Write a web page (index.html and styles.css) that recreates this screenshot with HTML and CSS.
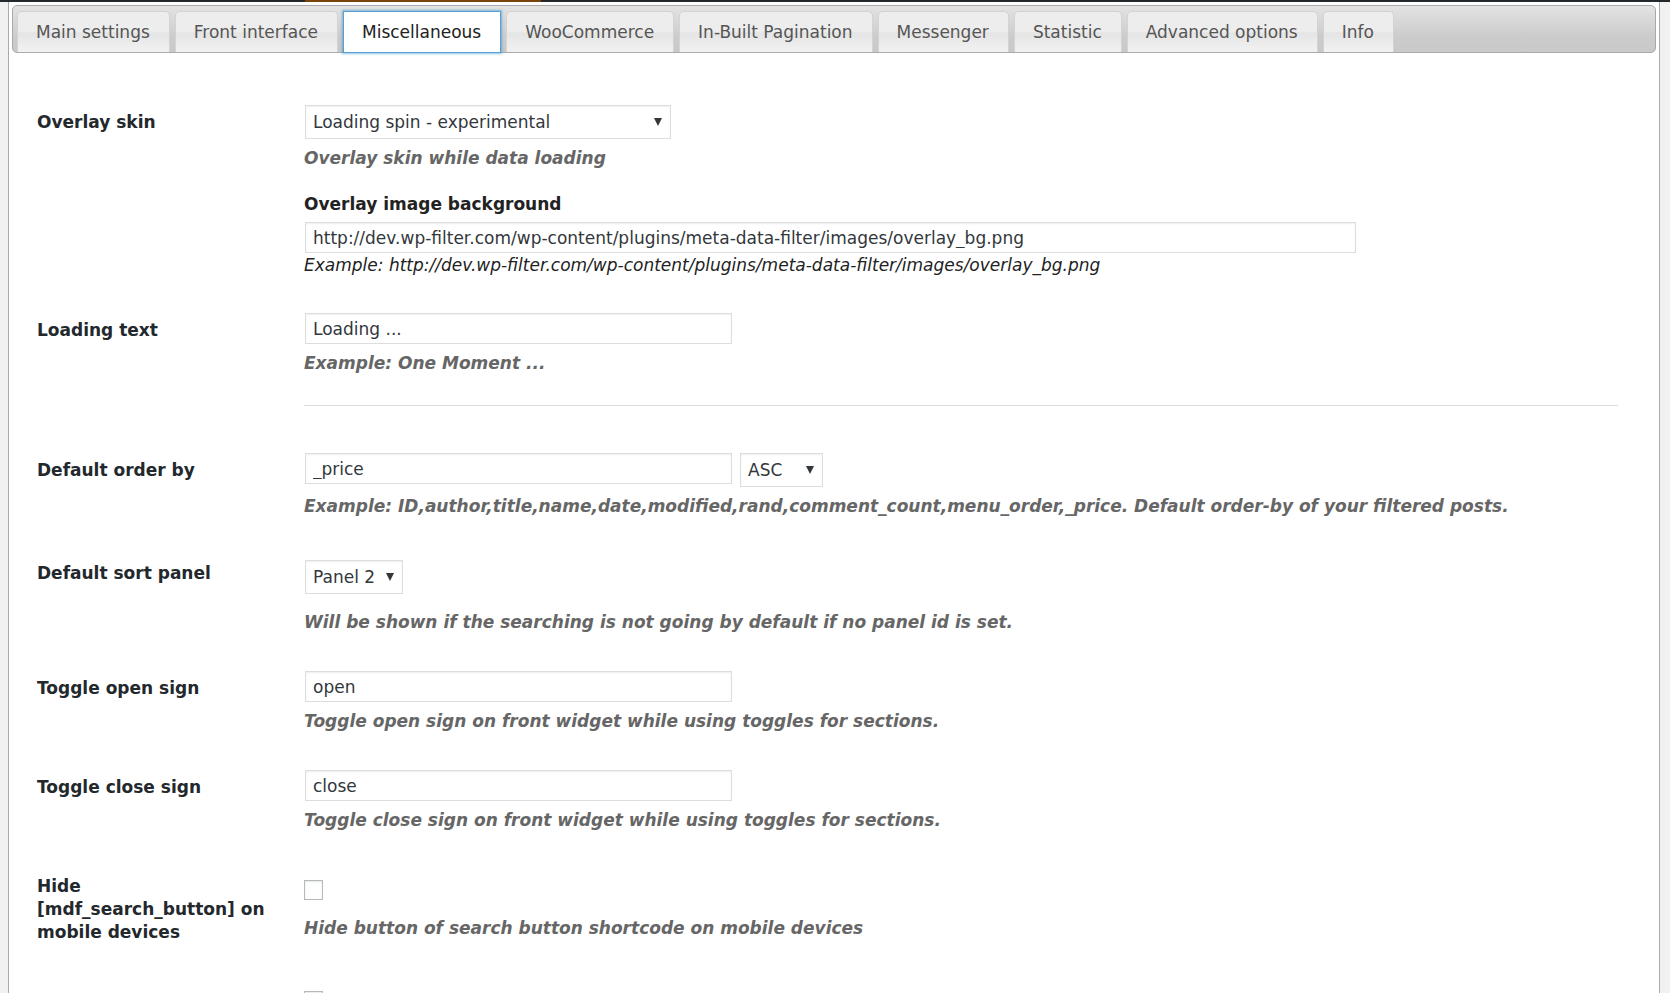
FILE: index.html
```
<!DOCTYPE html>
<html lang="en">

<head>
    <meta charset="utf-8">
    <title>Settings</title>
    <link rel="stylesheet" href="styles.css">
</head>

<body>

    <div class="admin-bar"><span class="admin-bar-item"></span></div>

    <form class="panel">
        <nav class="tabs">
            <a class="tab" href="#main">Main settings</a>
            <a class="tab" href="#front">Front interface</a>
            <a class="tab tab-active" href="#misc">Miscellaneous</a>
            <a class="tab" href="#woo">WooCommerce</a>
            <a class="tab" href="#pagination">In-Built Pagination</a>
            <a class="tab" href="#messenger">Messenger</a>
            <a class="tab" href="#statistic">Statistic</a>
            <a class="tab" href="#advanced">Advanced options</a>
            <a class="tab" href="#info">Info</a>
        </nav>

        <div class="content" id="misc">
            <table class="form-table">
                <tr>
                    <th scope="row"><label for="overlay_skin">Overlay skin</label></th>
                    <td>
                        <select class="select select-wide" id="overlay_skin">
                            <option>Loading spin - experimental</option>
                        </select>
                        <p class="description">Overlay skin while data loading</p>
                        <label class="sub-title" for="overlay_bg">Overlay image background</label>
                        <input class="text text-wide" type="text" id="overlay_bg" value="http://dev.wp-filter.com/wp-content/plugins/meta-data-filter/images/overlay_bg.png">
                        <i class="example">Example: http://dev.wp-filter.com/wp-content/plugins/meta-data-filter/images/overlay_bg.png</i>
                    </td>
                </tr>
                <tr>
                    <th scope="row"><label for="loading_text">Loading text</label></th>
                    <td>
                        <input class="text" type="text" id="loading_text" value="Loading ...">
                        <p class="description">Example: One Moment ...</p>
                        <hr>
                    </td>
                </tr>
                <tr class="row-order">
                    <th scope="row"><label for="order_by">Default order by</label></th>
                    <td>
                        <div class="fields">
                            <input class="text" type="text" id="order_by" value="_price">
                            <select class="select select-order" aria-label="Order">
                                <option>ASC</option>
                                <option>DESC</option>
                            </select>
                        </div>
                        <p class="description">Example: ID,author,title,name,date,modified,rand,comment_count,menu_order,_price. Default order-by of your filtered posts.</p>
                    </td>
                </tr>
                <tr class="row-panel">
                    <th scope="row"><label for="sort_panel">Default sort panel</label></th>
                    <td>
                        <select class="select select-panel" id="sort_panel">
                            <option>Panel 2</option>
                        </select>
                        <p class="description">Will be shown if the searching is not going by default if no panel id is set.</p>
                    </td>
                </tr>
                <tr>
                    <th scope="row"><label for="toggle_open">Toggle open sign</label></th>
                    <td>
                        <input class="text" type="text" id="toggle_open" value="open">
                        <p class="description">Toggle open sign on front widget while using toggles for sections.</p>
                    </td>
                </tr>
                <tr>
                    <th scope="row"><label for="toggle_close">Toggle close sign</label></th>
                    <td>
                        <input class="text" type="text" id="toggle_close" value="close">
                        <p class="description">Toggle close sign on front widget while using toggles for sections.</p>
                    </td>
                </tr>
                <tr class="row-check">
                    <th scope="row"><label for="hide_button">Hide [mdf_search_button] on mobile devices</label></th>
                    <td>
                        <input class="check" type="checkbox" id="hide_button">
                        <p class="description">Hide button of search button shortcode on mobile devices</p>
                    </td>
                </tr>
                <tr class="row-check">
                    <th></th>
                    <td>
                        <input class="check" type="checkbox" aria-label="Next option">
                    </td>
                </tr>
            </table>
        </div>
    </form>

</body>

</html>
```

FILE: styles.css
```
* {
    box-sizing: border-box;
}

html,
body {
    height: 100%;
}

body {
    display: flex;
    flex-direction: column;
    margin: 0;
    overflow: hidden;
    background-color: #f1f1f1;
    color: #222;
    font-family: Verdana, "DejaVu Sans", sans-serif;
    font-size: 17px;
    line-height: 24px;
}

.admin-bar {
    display: flex;
    flex: none;
    height: 2px;
    padding-left: 305px;
    background-color: #23282d;
}

.admin-bar-item {
    width: 236px;
    background-color: #7a430c;
}

.panel {
    flex: 1 0 auto;
    margin: 0 10px 0 8px;
    padding: 3px;
    border: 1px solid #aaa;
    border-width: 0 1px;
    background-color: #fff;
}

/* Tabs */
.tabs {
    display: flex;
    gap: 5px;
    height: 48px;
    padding: 5px 4px 0;
    border: 1px solid #aaa;
    border-radius: 5px;
    background: linear-gradient(#e3e3e3, #ccc 65%, #c9c9c9);
}

.tab {
    padding: 8px 19px 0 18px;
    border: 1px solid #d3d3d3;
    border-bottom: none;
    border-radius: 5px 5px 0 0;
    background: linear-gradient(#ededed 50%, #e4e4e4 52%, #f2f2f2);
    color: #555;
    text-decoration: none;
    white-space: nowrap;
}

.tab-active {
    margin-bottom: -1px;
    border: 1px solid #5b9dd9;
    border-radius: 0;
    background: #fff;
    box-shadow: 0 0 2px 1px rgba(30, 140, 190, .5);
    color: #212121;
}

/* Form */
.content {
    padding: 37px 28px 0 25px;
}

.form-table {
    width: 100%;
    border-collapse: collapse;
    table-layout: fixed;
}

.form-table th {
    width: 257px;
    padding: 21px 10px 19px 0;
    color: #23282d;
    font-weight: bold;
    line-height: 23px;
    text-align: left;
    vertical-align: top;
}

.form-table td {
    padding: 15px 10px;
    vertical-align: top;
}

.description {
    margin: 7px 0;
    color: #666;
    font-style: italic;
    font-weight: bold;
}

.sub-title {
    display: block;
    margin: 22px 0 6px;
    font-weight: bold;
}

.example {
    display: block;
    margin-bottom: 6px;
}

.text,
.select {
    display: block;
    margin: 0 1px;
    border: 1px solid #ddd;
    border-radius: 0;
    background-color: #fff;
    box-shadow: inset 0 1px 2px rgba(0, 0, 0, .07);
    color: #32373c;
    font: inherit;
}

.text {
    width: 427px;
    height: 31px;
    padding: 3px 7px;
}

.text-wide {
    width: 80%;
}

.select {
    height: 34px;
    padding: 0 7px;
    -webkit-appearance: none;
    appearance: none;
    background-image: url("data:image/svg+xml,%3Csvg xmlns='http://www.w3.org/2000/svg' width='8' height='8'%3E%3Cpath d='M0 0h8L4 8z' fill='%2332373c'/%3E%3C/svg%3E");
    background-repeat: no-repeat;
    background-position: right 8px top 12px;
}

.select-wide {
    width: 366px;
}

.select-order {
    width: 83px;
}

.select-panel {
    width: 98px;
}

.fields {
    display: flex;
    align-items: flex-start;
    gap: 6px;
}

hr {
    margin: 30px 0 17px;
    border: 0;
    border-top: 1px solid #ddd;
}

.row-order td {
    padding-bottom: 16px;
}

.row-panel td {
    padding-top: 19px;
}

.row-check td {
    padding-top: 26px;
}

.row-panel .description,
.row-check .description {
    margin-top: 16px;
}

.row-check .description {
    margin-bottom: 10px;
}

.check {
    display: block;
    width: 19px;
    height: 20px;
    margin: 0;
    -webkit-appearance: none;
    appearance: none;
    border: 1px solid #b4b9be;
    background-color: #fff;
    box-shadow: inset 0 1px 2px rgba(0, 0, 0, .1);
}

.check:checked {
    background-color: #1e8cbe;
}
```
